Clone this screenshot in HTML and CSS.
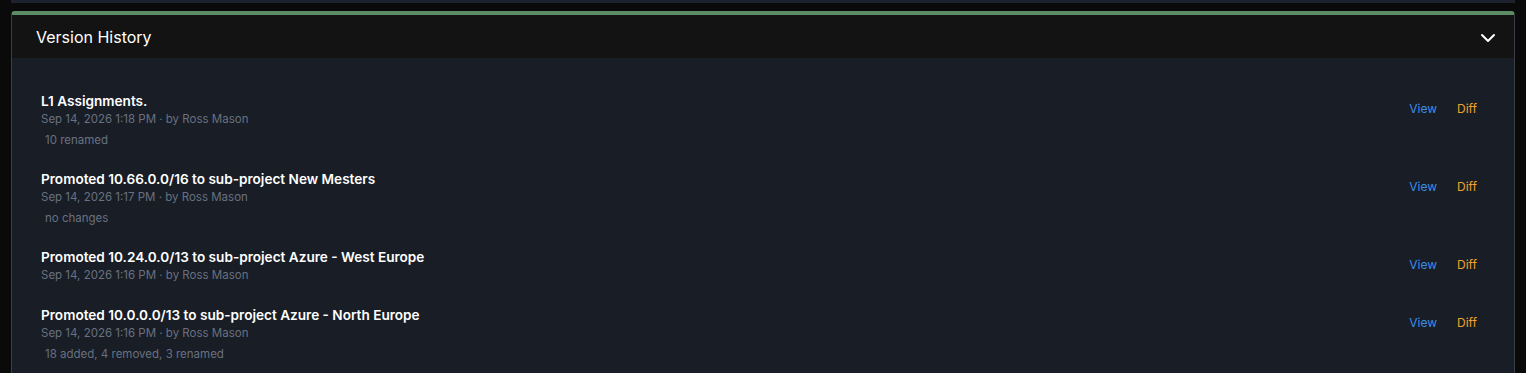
FILE: index.html
```html
<!DOCTYPE html>
<html lang="en">
<head>
<meta charset="utf-8">
<title>Version History</title>
<link rel="stylesheet" href="styles.css">
</head>
<body>
<div class="page">
  <div class="prev-card"></div>
  <section class="card">
    <header class="card-header">
      <h2 class="card-title">Version History</h2>
      <svg class="chevron" width="16" height="10" viewBox="0 0 16 10" aria-hidden="true">
        <path d="M2 2 L8 8 L14 2" fill="none" stroke="#ffffff" stroke-width="2" stroke-linecap="round" stroke-linejoin="round"/>
      </svg>
    </header>
    <div class="card-body">
      <div class="version">
        <div class="version-info">
          <div class="version-title">L1 Assignments.</div>
          <div class="version-meta">Sep 14, 2026 1:18 PM · by Ross Mason</div>
          <div class="version-summary">10 renamed</div>
        </div>
        <div class="version-actions">
          <a class="link view">View</a>
          <a class="link diff">Diff</a>
        </div>
      </div>
      <div class="version">
        <div class="version-info">
          <div class="version-title">Promoted 10.66.0.0/16 to sub-project New Mesters</div>
          <div class="version-meta">Sep 14, 2026 1:17 PM · by Ross Mason</div>
          <div class="version-summary">no changes</div>
        </div>
        <div class="version-actions">
          <a class="link view">View</a>
          <a class="link diff">Diff</a>
        </div>
      </div>
      <div class="version">
        <div class="version-info">
          <div class="version-title">Promoted 10.24.0.0/13 to sub-project Azure - West Europe</div>
          <div class="version-meta">Sep 14, 2026 1:16 PM · by Ross Mason</div>
        </div>
        <div class="version-actions">
          <a class="link view">View</a>
          <a class="link diff">Diff</a>
        </div>
      </div>
      <div class="version">
        <div class="version-info">
          <div class="version-title">Promoted 10.0.0.0/13 to sub-project Azure - North Europe</div>
          <div class="version-meta">Sep 14, 2026 1:16 PM · by Ross Mason</div>
          <div class="version-summary">18 added, 4 removed, 3 renamed</div>
        </div>
        <div class="version-actions">
          <a class="link view">View</a>
          <a class="link diff">Diff</a>
        </div>
      </div>
    </div>
  </section>
</div>
</body>
</html>
```

FILE: styles.css
```css
* { box-sizing: border-box; }

html, body {
  margin: 0;
  padding: 0;
  background: #0a0a0b;
  font-family: Inter, "Noto Sans", sans-serif;
  color: #ffffff;
}

.page {
  padding: 0 11px;
  display: flex;
  flex-direction: column;
  gap: 8px;
}

.prev-card {
  height: 3px;
  background: #1d232d;
}

.card {
  border: 1px solid #3a3f47;
  border-top: 4px solid #5b8c66;
  border-radius: 4px 4px 0 0;
  overflow: hidden;
}

.card-header {
  height: 43px;
  background: #131313;
  display: flex;
  align-items: center;
  justify-content: space-between;
  padding: 0 18px 0 24px;
}

.card-title {
  margin: 0;
  font-size: 16px;
  font-weight: 400;
  color: #ffffff;
}

.chevron { display: block; margin-top: 2px; }

.card-body {
  background: #181d26;
  padding: 23px 0 0;
  min-height: 320px;
}

.version {
  display: flex;
  justify-content: space-between;
  align-items: flex-start;
  padding: 11px 37px 11px 29px;
}

.version-info {
  display: flex;
  flex-direction: column;
}

.version-title {
  font-size: 13.6px;
  font-weight: 600;
  line-height: 18px;
  color: #ffffff;
}

.version-meta {
  font-size: 11.5px;
  line-height: 18px;
  color: #697180;
}

.version-summary {
  font-size: 11.5px;
  line-height: 16px;
  margin-top: 4px;
  padding-left: 4px;
  color: #697180;
}

.version-actions {
  display: flex;
  gap: 20px;
  margin-top: 9px;
  font-size: 12px;
  line-height: 16px;
}

.link { cursor: pointer; }
.view { color: #3b8eea; }
.diff { color: #f2a12a; }
```
